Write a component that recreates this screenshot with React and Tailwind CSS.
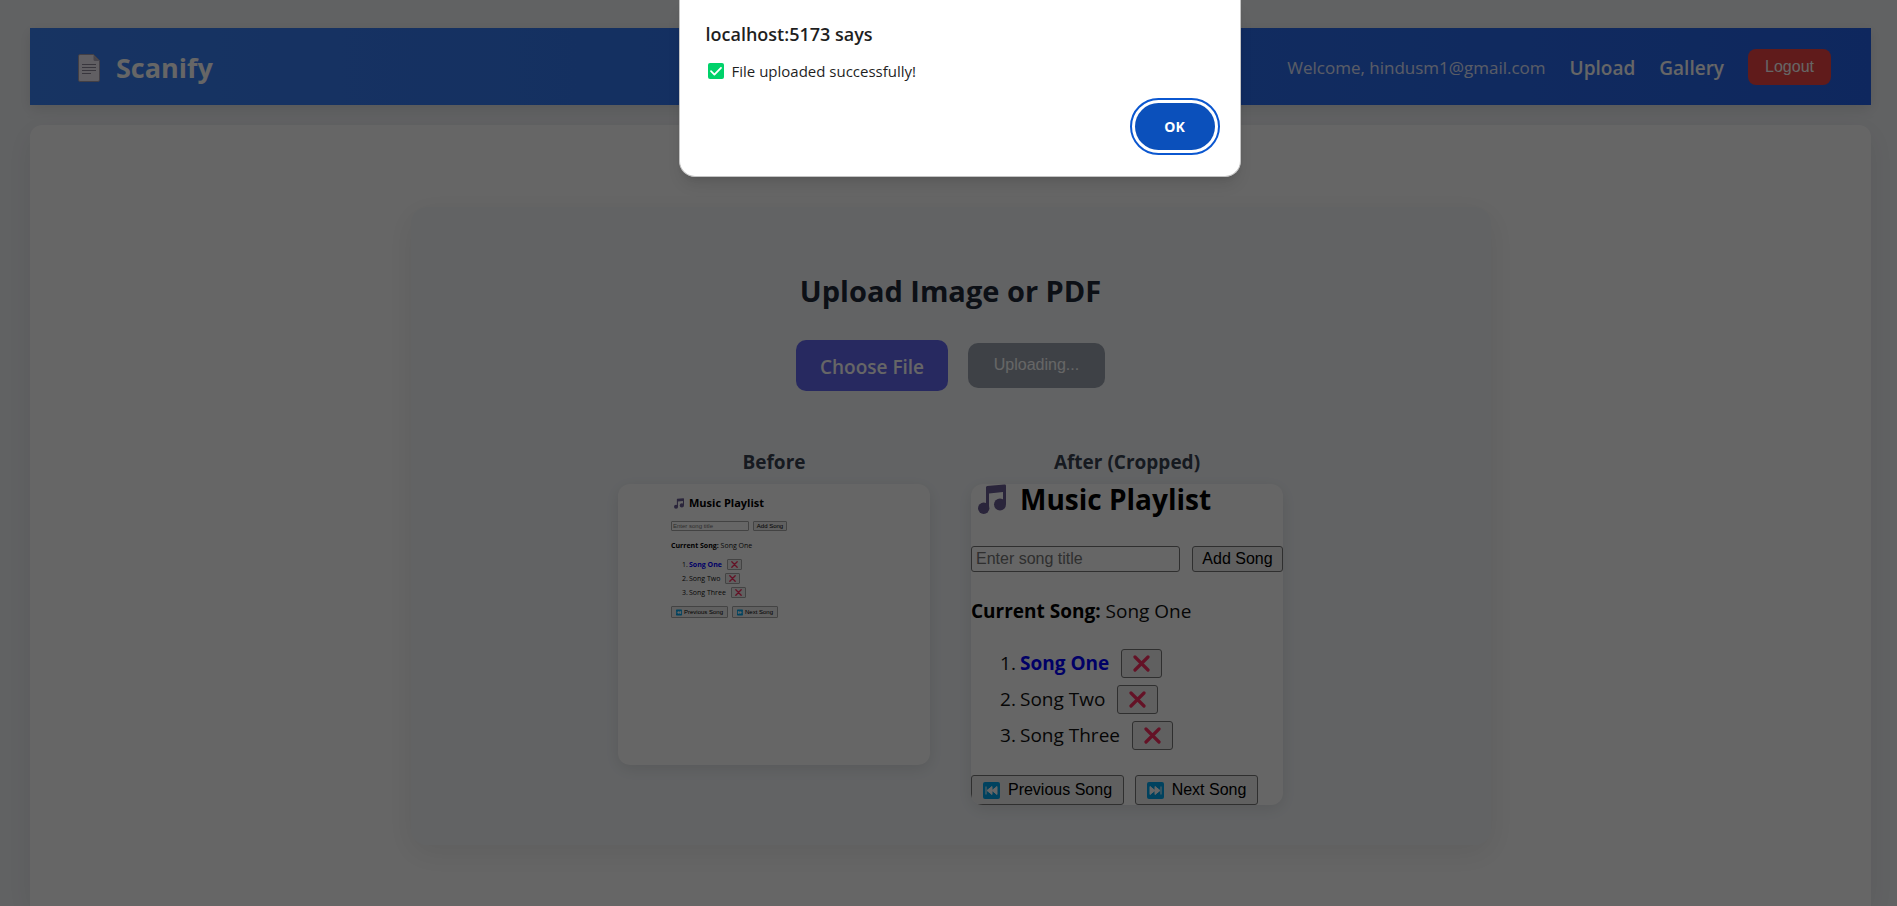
const UI = "font-['Open_Sans','Noto_Sans',sans-serif]";
const ARIAL = "font-['Liberation_Sans',Arial,sans-serif]";

function PageIcon({ className }) {
  return (
    <svg viewBox="0 0 22 28" className={className} aria-hidden="true">
      <path d="M2 .5h13.500l6 6V26a1.500 1.500 0 0 1-1.500 1.500H2A1.500 1.500 0 0 1 .5 26V2A1.500 1.500 0 0 1 2 .5z" fill="#f3eef8" stroke="#a59fae" />
      <path d="M15.500 1v4.500a1.500 1.500 0 0 0 1.500 1.500h4.500z" fill="#b3acbd" />
      <path d="M4 10.500h14M4 13.500h14M4 16.500h14M4 19.500h9" stroke="#8d8798" strokeWidth="1" />
    </svg>
  );
}

function CheckIcon({ className }) {
  return (
    <svg viewBox="0 0 16 16" className={className} aria-hidden="true">
      <rect width="16" height="16" rx="2" fill="#00d26a" />
      <path d="M3 8.200l3.400 3.400L13 4.800" fill="none" stroke="#fff" strokeWidth="1.800" strokeLinecap="round" strokeLinejoin="round" />
    </svg>
  );
}

function NoteIcon({ className }) {
  return (
    <svg viewBox="0 0 28 30" className={className} aria-hidden="true">
      <g fill="#6a5c94">
        <path d="M8 3.500Q8 2.200 9.200 2L26.500 .6Q28 .5 28 1.800V20h-3V8L11 9.400V25H8z" />
        <circle cx="5.700" cy="24.200" r="5.700" />
        <circle cx="22" cy="20.500" r="6" />
      </g>
    </svg>
  );
}

function CrossIcon({ className }) {
  return (
    <svg viewBox="0 0 17 17" className={className} aria-hidden="true">
      <path d="M2 2l13 13M15 2L2 15" stroke="#f92f60" strokeWidth="3.200" strokeLinecap="round" />
    </svg>
  );
}

function SkipIcon({ className, back }) {
  return (
    <svg viewBox="0 0 17 17" className={className} aria-hidden="true">
      <rect width="17" height="17" rx="2" fill="#00a6ed" />
      <path
        d={back ? "M3 4.500v8M14 4.500v8L9 8.500zM9 4.500v8L4 8.500z" : "M14 4.500v8M3 4.500v8l5-4zM8 4.500v8l5-4z"}
        fill="#fff"
        stroke="#fff"
        strokeWidth="1"
        strokeLinejoin="round"
      />
    </svg>
  );
}

const large = {
  title: "h-[30px] gap-[14px] pl-[7px] text-[28px] leading-[30px]",
  note: "w-7 h-[30px]",
  form: "mt-8 gap-3",
  input: "h-[26px] w-[209px] rounded-[3px] px-1 text-base",
  add: "h-[26px] w-[91px] rounded-[3px] text-base",
  current: "mt-[25px] text-[19px] leading-7",
  list: "mt-6 gap-[7px] pl-[29px] text-[19px] leading-[29px]",
  row: "h-[29px]",
  num: "w-5",
  remove: "ml-3 h-[29px] w-[41px] rounded-[3px]",
  cross: "size-[17px]",
  nav: "mt-[25px] gap-[11px]",
  navButton: "h-[30px] gap-2 rounded-[3px] px-[9px] text-base",
  prev: "w-[153px]",
  next: "w-[123px]",
};

const small = {
  title: "h-3 gap-[5px] pl-[3px] text-[11px] leading-3",
  note: "w-[10px] h-[11px]",
  form: "mt-3 gap-1",
  input: "h-[10px] w-[78px] rounded-[1px] px-px text-[6px]",
  add: "h-[10px] w-[34px] rounded-[1px] text-[6px]",
  current: "mt-[10px] text-[7px] leading-[10px]",
  list: "mt-2 gap-[3px] pl-[11px] text-[7px] leading-[11px]",
  row: "h-[11px]",
  num: "w-[7px]",
  remove: "ml-[5px] h-[11px] w-[15px] rounded-[1px]",
  cross: "size-[7px]",
  nav: "mt-2 gap-1",
  navButton: "h-[12px] gap-[2px] rounded-[1px] px-1 text-[6px]",
  prev: "w-[57px]",
  next: "w-[46px]",
};

const songs = ["Song One", "Song Two", "Song Three"];

function Playlist({ s, label, border }) {
  const button = "flex shrink-0 items-center justify-center border bg-[#efefef] text-black whitespace-nowrap " + border + " " + ARIAL;
  return (
    <div className="text-[#111]">
      <h4 className={"flex items-center font-bold text-black whitespace-nowrap " + s.title}>
        <NoteIcon className={s.note} />
        Music Playlist
      </h4>
      <div className={"flex " + s.form}>
        <input type="text" aria-label={label + " song title"} placeholder="Enter song title" className={"border bg-white placeholder:text-[#757575] " + border + " " + ARIAL + " " + s.input} />
        <button type="button" className={button + " " + s.add}>Add Song</button>
      </div>
      <p className={"whitespace-nowrap " + s.current}>
        <strong className="font-bold text-black">Current Song:</strong> Song One
      </p>
      <ol className={"flex flex-col " + s.list}>
        {songs.map((song, i) => (
          <li key={song} className={"flex items-center whitespace-nowrap " + s.row}>
            <span className={s.num}>{i + 1}.</span>
            <span className={i === 0 ? "font-bold text-[#0000ff]" : ""}>{song}</span>
            <button type="button" aria-label={"Remove " + song} className={button + " " + s.remove}>
              <CrossIcon className={s.cross} />
            </button>
          </li>
        ))}
      </ol>
      <div className={"flex " + s.nav}>
        <button type="button" className={button + " " + s.navButton + " " + s.prev}>
          <SkipIcon back className={s.cross} />
          Previous Song
        </button>
        <button type="button" className={button + " " + s.navButton + " " + s.next}>
          <SkipIcon className={s.cross} />
          Next Song
        </button>
      </div>
    </div>
  );
}

function Header() {
  return (
    <header className="flex h-[77px] items-center justify-between bg-linear-to-r from-[#3b82f6] to-[#2563eb] pr-10 pl-12 shadow-[0_4px_12px_rgba(0,0,0,0.1)]">
      <h1 className="flex items-center gap-4 pt-[2px] text-[27px] leading-9 font-bold text-white">
        <PageIcon className="h-7 w-[22px]" />
        Scanify
      </h1>
      <nav className="flex items-center gap-6 text-white">
        <span className="pt-[2px] text-[17px] text-[#e0e7ff]">Welcome, hindusm1@gmail.com</span>
        <a href="#upload" className="pt-[3px] text-[19px] font-semibold">Upload</a>
        <a href="#gallery" className="pt-[3px] text-[19px] font-semibold">Gallery</a>
        <button type="button" className={"h-9 w-[83px] rounded-lg bg-[#ef4444] text-base " + ARIAL}>Logout</button>
      </nav>
    </header>
  );
}

function Preview({ title, className, children }) {
  return (
    <figure className="flex w-[312px] flex-col gap-2">
      <figcaption className="text-center text-[19px] leading-7 font-bold text-[#374151]">{title}</figcaption>
      <div className={"overflow-hidden rounded-xl bg-white shadow-[0_4px_16px_rgba(0,0,0,0.1)] " + className}>{children}</div>
    </figure>
  );
}

export default function App() {
  return (
    <div className={"relative flex min-h-screen flex-col gap-5 bg-[#f3f5f8] pt-7 pr-[26px] pl-[30px] " + UI}>
      <Header />
      <main className="grow rounded-t-xl bg-white pt-[82px] pb-[61px] shadow-[0_8px_30px_rgba(0,0,0,0.08)]">
        <section className="mx-auto flex h-[638px] max-w-[1080px] flex-col items-center rounded-2xl bg-[#f5f8fb] pt-16 shadow-[0_8px_30px_rgba(0,0,0,0.08)]">
          <h2 className="text-[29px] leading-10 font-bold text-[#1f2937]">Upload Image or PDF</h2>
          <div className="mt-[29px] flex items-center gap-5">
            <label htmlFor="file" className="flex h-[51px] w-[152px] cursor-pointer items-center justify-center rounded-[10px] bg-[#6366f1] pt-1 text-[19px] font-semibold text-white">
              Choose File
            </label>
            <input id="file" type="file" className="hidden" />
            <button type="button" disabled className={"h-[45px] w-[137px] rounded-[10px] bg-[#9ca3af] pb-[2px] text-base text-white " + ARIAL}>Uploading...</button>
          </div>
          <div className="mt-[57px] flex items-start gap-[41px]">
            <Preview title="Before" className="h-[281px] pt-[13px] pl-[53px]">
              <Playlist s={small} label="Before" border="border-[#a8a8a8]" />
            </Preview>
            <Preview title="After (Cropped)" className="h-[321px]">
              <Playlist s={large} label="After" border="border-[#767676]" />
            </Preview>
          </div>
        </section>
      </main>

      <div className="absolute inset-0 bg-black/60">
        <div role="alertdialog" aria-labelledby="alert-title" aria-describedby="alert-text" className="mx-auto flex h-[177px] w-[562px] translate-x-[11px] flex-col rounded-b-2xl border border-t-0 border-[#c4c4c4] bg-white px-[26px] pt-5 text-[#1f1f1f] shadow-lg">
          <h2 id="alert-title" className="text-[18px] leading-7 font-semibold">localhost:5173 says</h2>
          <p id="alert-text" className="mt-[11px] flex items-center gap-2 pl-[2px] text-[15px] leading-6">
            <CheckIcon className="size-4" />
            File uploaded successfully!
          </p>
          <button type="button" className="mt-5 mr-[-1px] h-[47px] w-20 self-end rounded-full bg-[#0b50bb] text-sm font-bold text-white outline-2 outline-offset-3 outline-[#0b57d0]">OK</button>
        </div>
      </div>
    </div>
  );
}
